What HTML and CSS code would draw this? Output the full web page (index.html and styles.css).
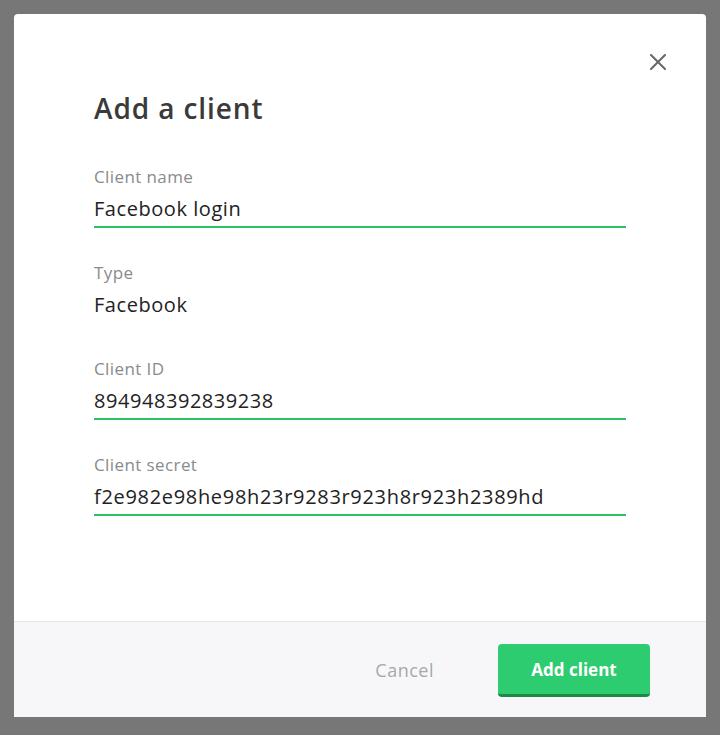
FILE: index.html
```html
<!DOCTYPE html>
<html>
<head>
<meta charset="utf-8">
<link rel="stylesheet" href="styles.css">
</head>
<body>
<div class="modal">
  <button class="close" aria-label="Close">
    <svg width="16" height="16" viewBox="0 0 16 16"><path d="M1 1L15 15M15 1L1 15" stroke="#666" stroke-width="2" stroke-linecap="round"/></svg>
  </button>
  <div class="modal-body">
    <h1 class="title">Add a client</h1>
    <div class="field">
      <div class="label">Client name</div>
      <div class="value input">Facebook login</div>
    </div>
    <div class="field">
      <div class="label">Type</div>
      <div class="value">Facebook</div>
    </div>
    <div class="field">
      <div class="label">Client ID</div>
      <div class="value input">894948392839238</div>
    </div>
    <div class="field">
      <div class="label">Client secret</div>
      <div class="value input secret">f2e982e98he98h23r9283r923h8r923h2389hd</div>
    </div>
  </div>
  <div class="footer">
    <button class="cancel">Cancel</button>
    <button class="primary">Add client</button>
  </div>
</div>
</body>
</html>
```
FILE: styles.css
```css
* { box-sizing: border-box; }
html, body { margin: 0; }
body {
  background: #777777;
  padding: 14px;
  font-family: "Open Sans", Lato, sans-serif;
  height: 735px;
  overflow: hidden;
}
.modal {
  position: relative;
  width: 692px;
  background: #fff;
  border-radius: 4px 4px 0 0;
}
.close {
  position: absolute;
  top: 40px;
  right: 40px;
  width: 16px;
  height: 16px;
  padding: 0;
  border: 0;
  background: none;
  display: block;
}
.close svg { display: block; }
.modal-body {
  padding: 77px 80px 105px 80px;
}
.title {
  margin: 0 0 42px;
  font-size: 28px;
  line-height: 34px;
  font-weight: 600;
  color: #3a3a3a;
  letter-spacing: 0.9px;
}
.field { margin-bottom: 35px; }
.field:last-child { margin-bottom: 0; }
.label {
  font-size: 17px;
  line-height: 20px;
  color: #8a8a8a;
  margin-bottom: 10px;
  letter-spacing: 0.4px;
}
.value {
  font-size: 20px;
  line-height: 24px;
  color: #222;
  padding-bottom: 5px;
  border-bottom: 2px solid transparent;
  letter-spacing: 0.55px;
}
.value.secret { letter-spacing: 0.68px; }
.value.input { border-bottom-color: #25c466; }
.footer {
  height: 96px;
  border-top: 1px solid #e6e6ea;
  background: #f7f7f9;
  display: flex;
  align-items: center;
  justify-content: flex-end;
  padding-right: 56px;
  gap: 64px;
}
.cancel {
  border: 0;
  background: none;
  padding: 0;
  font-family: inherit;
  font-size: 18px;
  letter-spacing: 0.5px;
  color: #a8a8a8;
}
.primary {
  width: 152px;
  height: 53px;
  border: 0;
  border-bottom: 3px solid #1c8a45;
  border-radius: 4px;
  background: #2ecc71;
  color: #fff;
  font-family: inherit;
  font-size: 17px;
  font-weight: 700;
  margin-top: 2px;
}
```
